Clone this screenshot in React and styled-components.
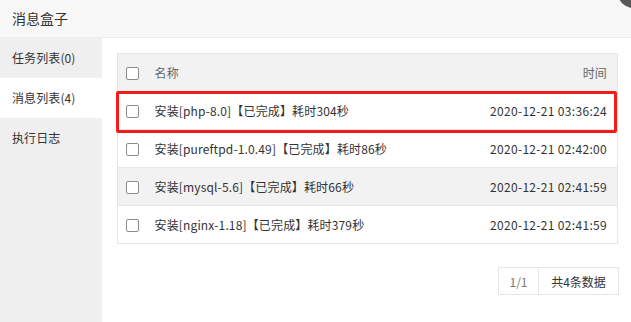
import React from "react";
import styled, { createGlobalStyle } from "styled-components";

const Global = createGlobalStyle`
  html, body { margin: 0; padding: 0; background: #fff; }
  body { font-family: "Noto Sans CJK SC", "Noto Sans", sans-serif; color: #333; }
  * { box-sizing: border-box; }
`;

const Layer = styled.div`
  position: relative;
  width: 631px;
  height: 322px;
  overflow: hidden;
  background: #fff;
  display: flex;
  flex-direction: column;
`;

const Title = styled.div`
  height: 38px;
  flex: none;
  padding-left: 12px;
  background: #f8f8f8;
  border-bottom: 1px solid #eee;
  font-size: 14px;
  line-height: 37px;
  color: #333;
`;

const Close = styled.span`
  position: absolute;
  left: 618px;
  top: -22px;
  width: 30px;
  height: 30px;
  border-radius: 50%;
  background: #595959;
  &::before, &::after {
    content: "";
    position: absolute;
    left: 6px;
    top: 14px;
    width: 18px;
    height: 2px;
    background: #fff;
  }
  &::before { transform: rotate(45deg); }
  &::after { transform: rotate(-45deg); }
`;

const Body = styled.div`
  flex: 1;
  display: flex;
  min-height: 0;
`;

const Side = styled.ul`
  list-style: none;
  margin: 0;
  padding: 0;
  width: 102px;
  flex: none;
  background: #efefef;
`;

const SideItem = styled.li`
  height: 40px;
  line-height: 40px;
  padding-left: 12px;
  font-size: 12px;
  letter-spacing: 0.1px;
  color: #333;
  background: ${(p) => (p.$active ? "#fff" : "transparent")};
`;

const Main = styled.div`
  flex: 1;
  padding: 15px 13px 0 15px;
  display: flex;
  flex-direction: column;
`;

const TableWrap = styled.div`
  position: relative;
`;

const Table = styled.table`
  width: 100%;
  border-collapse: collapse;
  border: 1px solid #e6e6e6;
  font-size: 12px;
`;

const Row = styled.tr`
  height: 38px;
  background: ${(p) => (p.$head || p.$hover ? "#f2f2f2" : "#fff")};
  border-bottom: 1px solid #e6e6e6;
`;

const Cell = styled.td`
  padding: 0;
  color: ${(p) => (p.$head ? "#666" : "#333")};
  text-align: ${(p) => (p.$right ? "right" : "left")};
  padding-right: ${(p) => (p.$right ? "10px" : "0")};
  letter-spacing: ${(p) => (p.$right && !p.$head ? "0.32px" : "0.15px")};
  width: ${(p) => p.$w || "auto"};
  white-space: nowrap;
  vertical-align: middle;
`;

const Check = styled.span`
  display: block;
  width: 13px;
  height: 13px;
  margin-left: 8px;
  margin-top: 1px;
  border: 1px solid #8c8c8c;
  border-radius: 2px;
  background: #fff;
`;

const Highlight = styled.div`
  position: absolute;
  left: -1px;
  top: 38px;
  width: 501px;
  height: 42px;
  border: 3px solid #f21c1c;
  border-radius: 2px;
  pointer-events: none;
`;

const Pager = styled.div`
  align-self: flex-end;
  margin-top: 23px;
  margin-right: -1px;
  display: flex;
  height: 28px;
  border: 1px solid #e6e6e6;
  font-size: 12px;
`;

const PagerCell = styled.span`
  display: flex;
  align-items: center;
  justify-content: center;
  width: ${(p) => p.$w}px;
  color: ${(p) => (p.$muted ? "#777" : "#333")};
  border-left: ${(p) => (p.$first ? "none" : "1px solid #e6e6e6")};
`;

const rows = [
  { name: "安装[php-8.0]【已完成】耗时304秒", time: "2020-12-21 03:36:24" },
  { name: "安装[pureftpd-1.0.49]【已完成】耗时86秒", time: "2020-12-21 02:42:00" },
  { name: "安装[mysql-5.6]【已完成】耗时66秒", time: "2020-12-21 02:41:59", hover: true },
  { name: "安装[nginx-1.18]【已完成】耗时379秒", time: "2020-12-21 02:41:59" },
];

export default function App() {
  return (
    <>
      <Global />
      <Layer>
        <Title>消息盒子</Title>
        <Close />
        <Body>
          <Side>
            <SideItem>任务列表(0)</SideItem>
            <SideItem $active>消息列表(4)</SideItem>
            <SideItem>执行日志</SideItem>
          </Side>
          <Main>
            <TableWrap>
              <Table>
                <tbody>
                  <Row $head>
                    <Cell $w="37px"><Check /></Cell>
                    <Cell $head>名称</Cell>
                    <Cell $head $right>时间</Cell>
                  </Row>
                  {rows.map((r) => (
                    <Row key={r.name} $hover={r.hover}>
                      <Cell $w="37px"><Check /></Cell>
                      <Cell>{r.name}</Cell>
                      <Cell $right>{r.time}</Cell>
                    </Row>
                  ))}
                </tbody>
              </Table>
              <Highlight />
            </TableWrap>
            <Pager>
              <PagerCell $first $muted $w={39}>1/1</PagerCell>
              <PagerCell $w={80}>共4条数据</PagerCell>
            </Pager>
          </Main>
        </Body>
      </Layer>
    </>
  );
}
